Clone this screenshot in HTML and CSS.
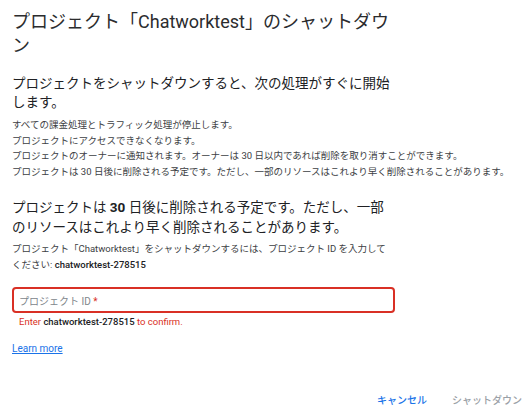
FILE: index.html
```html
<!DOCTYPE html>
<html lang="ja">
  <head>
    <meta charset="UTF-8" />
    <meta name="viewport" content="width=device-width, initial-scale=1.0" />
    <title>プロジェクトのシャットダウン</title>
    <link rel="stylesheet" href="styles.css">
  </head>
  <body>
    <div class="dialog">
      <div class="content">
        <h1 class="title">プロジェクト「Chatworktest」のシャットダウン</h1>

        <p class="lead">プロジェクトをシャットダウンすると、次の処理がすぐに開始します。</p>
        <ul class="effects">
          <li>すべての課金処理とトラフィック処理が停止します。</li>
          <li>プロジェクトにアクセスできなくなります。</li>
          <li>プロジェクトのオーナーに通知されます。オーナーは 30 日以内であれば削除を取り消すことができます。</li>
          <li>プロジェクトは 30 日後に削除される予定です。ただし、一部のリソースはこれより早く削除されることがあります。</li>
        </ul>

        <p class="lead warn">プロジェクトは <b>30</b> 日後に削除される予定です。ただし、一部のリソースはこれより早く削除されることがあります。</p>
        <p class="hint">プロジェクト「Chatworktest」をシャットダウンするには、プロジェクト ID を入力してください: <b>chatworktest-278515</b></p>

        <div class="field">
          <span class="label">プロジェクト ID <span class="req">*</span></span>
        </div>
        <div class="error">Enter <b>chatworktest-278515</b> to confirm.</div>

        <a class="learn" href="#">Learn more</a>
      </div>

      <div class="actions">
        <button class="btn cancel">キャンセル</button>
        <button class="btn" disabled>シャットダウン</button>
      </div>
    </div>
  </body>
</html>
```

FILE: styles.css
```css
body {
  margin: 0;
  padding: 0 0 0 12px;
  font-family: Roboto, "Noto Sans CJK JP", sans-serif;
  color: #202124;
  background: #fff;
}

.dialog {
  padding-top: 10px;
}

.content {
  width: 380px;
}

.title {
  margin: 0;
  font-size: 18px;
  font-weight: 400;
  line-height: 24px;
  color: #2b2c2e;
}

.lead {
  margin: 16px 0 0;
  font-size: 13.5px;
  line-height: 19px;
}

.lead b {
  font-weight: 700;
}

.effects {
  list-style: none;
  margin: 5px 0 0;
  padding: 0;
  font-size: 9.5px;
  line-height: 15.5px;
  color: #3c4043;
  white-space: nowrap;
}

.warn {
  margin-top: 18px;
  line-height: 20px;
}

.hint {
  margin: 4px 0 0;
  font-size: 9.5px;
  line-height: 16px;
  color: #3c4043;
}

.hint b {
  color: #202124;
  font-weight: 500;
}

.field {
  margin-top: 14px;
  height: 26px;
  box-sizing: border-box;
  border: 2px solid #d93025;
  border-radius: 4px;
  display: flex;
  align-items: center;
  padding-left: 5px;
  width: 383px;
}

.label {
  font-size: 10px;
  color: #80868b;
}

.req {
  color: #d93025;
}

.error {
  margin-top: 2px;
  padding-left: 7px;
  font-size: 9.5px;
  line-height: 14px;
  color: #d93025;
}

.error b {
  color: #202124;
  font-weight: 500;
}

.learn {
  display: inline-block;
  margin-top: 13px;
  font-size: 10px;
  line-height: 14px;
  color: #1a73e8;
}

.actions {
  display: flex;
  justify-content: flex-end;
  gap: 9px;
  margin-top: 29px;
}

.btn {
  height: 28px;
  padding: 0 8px;
  border: none;
  background: none;
  font-family: inherit;
  font-size: 10px;
  font-weight: 500;
  color: #9aa0a6;
  cursor: pointer;
}

.btn.cancel {
  color: #1a73e8;
}
```
